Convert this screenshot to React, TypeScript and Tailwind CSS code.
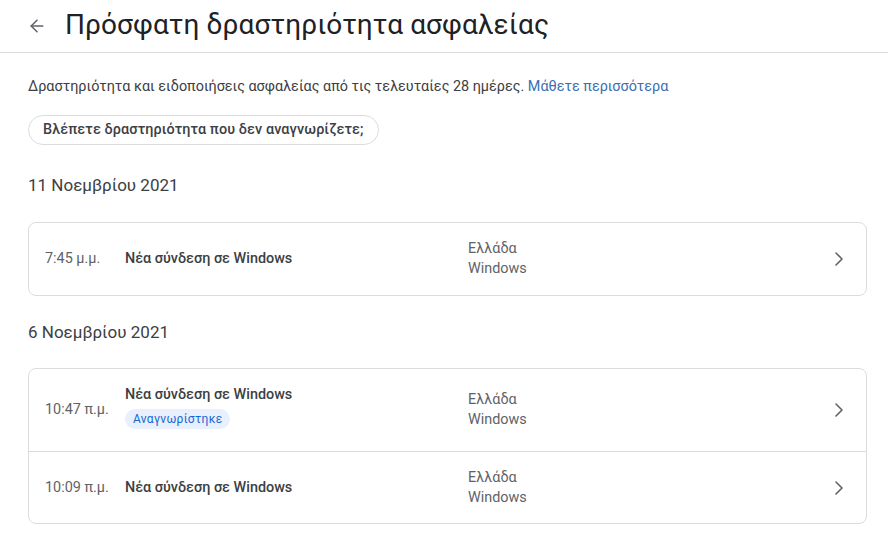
import { ArrowLeft, ChevronRight } from "lucide-react";

type Event = {
  time: string;
  title: string;
  recognized?: boolean;
  place: string;
  os: string;
};

const groups: { date: string; events: Event[] }[] = [
  {
    date: "11 Νοεμβρίου 2021",
    events: [{ time: "7:45 μ.μ.", title: "Νέα σύνδεση σε Windows", place: "Ελλάδα", os: "Windows" }],
  },
  {
    date: "6 Νοεμβρίου 2021",
    events: [
      { time: "10:47 π.μ.", title: "Νέα σύνδεση σε Windows", recognized: true, place: "Ελλάδα", os: "Windows" },
      { time: "10:09 π.μ.", title: "Νέα σύνδεση σε Windows", place: "Ελλάδα", os: "Windows" },
    ],
  },
];

function EventRow({ event, first }: { event: Event; first: boolean }) {
  return (
    <div
      className={`flex items-center pl-[16px] pr-[15px] ${event.recognized ? "h-[82px]" : "h-[72px]"} ${
        first ? "" : "border-t border-[#dadce0]"
      }`}
    >
      <div className="w-[80px] text-[14.4px] text-[#5f6368]">{event.time}</div>
      <div className={`flex w-[343px] flex-col items-start ${event.recognized ? "mb-[6px]" : ""}`}>
        <div className="text-[14.4px] font-medium leading-[20px] text-[#3c4043]">{event.title}</div>
        {event.recognized && (
          <span className="mt-[4px] rounded-full bg-[#e8f0fe] px-[8px] py-[1px] text-[12px] tracking-[0.3px] text-[#1967d2]">
            Αναγνωρίστηκε
          </span>
        )}
      </div>
      <div className="flex flex-1 flex-col text-[14.4px] leading-[20px] text-[#5f6368]">
        <span>{event.place}</span>
        <span>{event.os}</span>
      </div>
      <ChevronRight className="h-6 w-6 text-[#5f6368]" strokeWidth={1.6} />
    </div>
  );
}

export default function App() {
  return (
    <div className="h-[546px] w-[888px] bg-white font-['Roboto',sans-serif] text-[#202124]">
      <header className="flex h-[53px] items-center border-b border-[#dadce0] pl-[27px]">
        <ArrowLeft className="h-[20px] w-[20px] text-[#5f6368]" strokeWidth={1.8} />
        <h1 className="ml-[18px] mt-[-2px] text-[28px] font-normal tracking-[0.1px] text-[#202124]">
          Πρόσφατη δραστηριότητα ασφαλείας
        </h1>
      </header>

      <main className="pl-[28px] pr-[21px] pt-[24px]">
        <p className="text-[14.4px] leading-[20px] text-[#3c4043]">
          Δραστηριότητα και ειδοποιήσεις ασφαλείας από τις τελευταίες 28 ημέρες.{" "}
          <span className="text-[#3c6eb4]">Μάθετε περισσότερα</span>
        </p>

        <button className="mt-[18px] h-[30px] rounded-full border border-[#dadce0] px-[14px] text-[14.4px] font-medium tracking-[0.1px] text-[#3c4043]">
          Βλέπετε δραστηριότητα που δεν αναγνωρίζετε;
        </button>

        {groups.map((group, gi) => (
          <section key={group.date}>
            <h2 className={`${gi === 0 ? "mt-[28px]" : "mt-[24px]"} text-[17px] text-[#3c4043]`}>{group.date}</h2>
            <div className="mt-[23px] overflow-hidden rounded-[8px] border border-[#dadce0]">
              {group.events.map((event, i) => (
                <EventRow key={event.time} event={event} first={i === 0} />
              ))}
            </div>
          </section>
        ))}
      </main>
    </div>
  );
}
